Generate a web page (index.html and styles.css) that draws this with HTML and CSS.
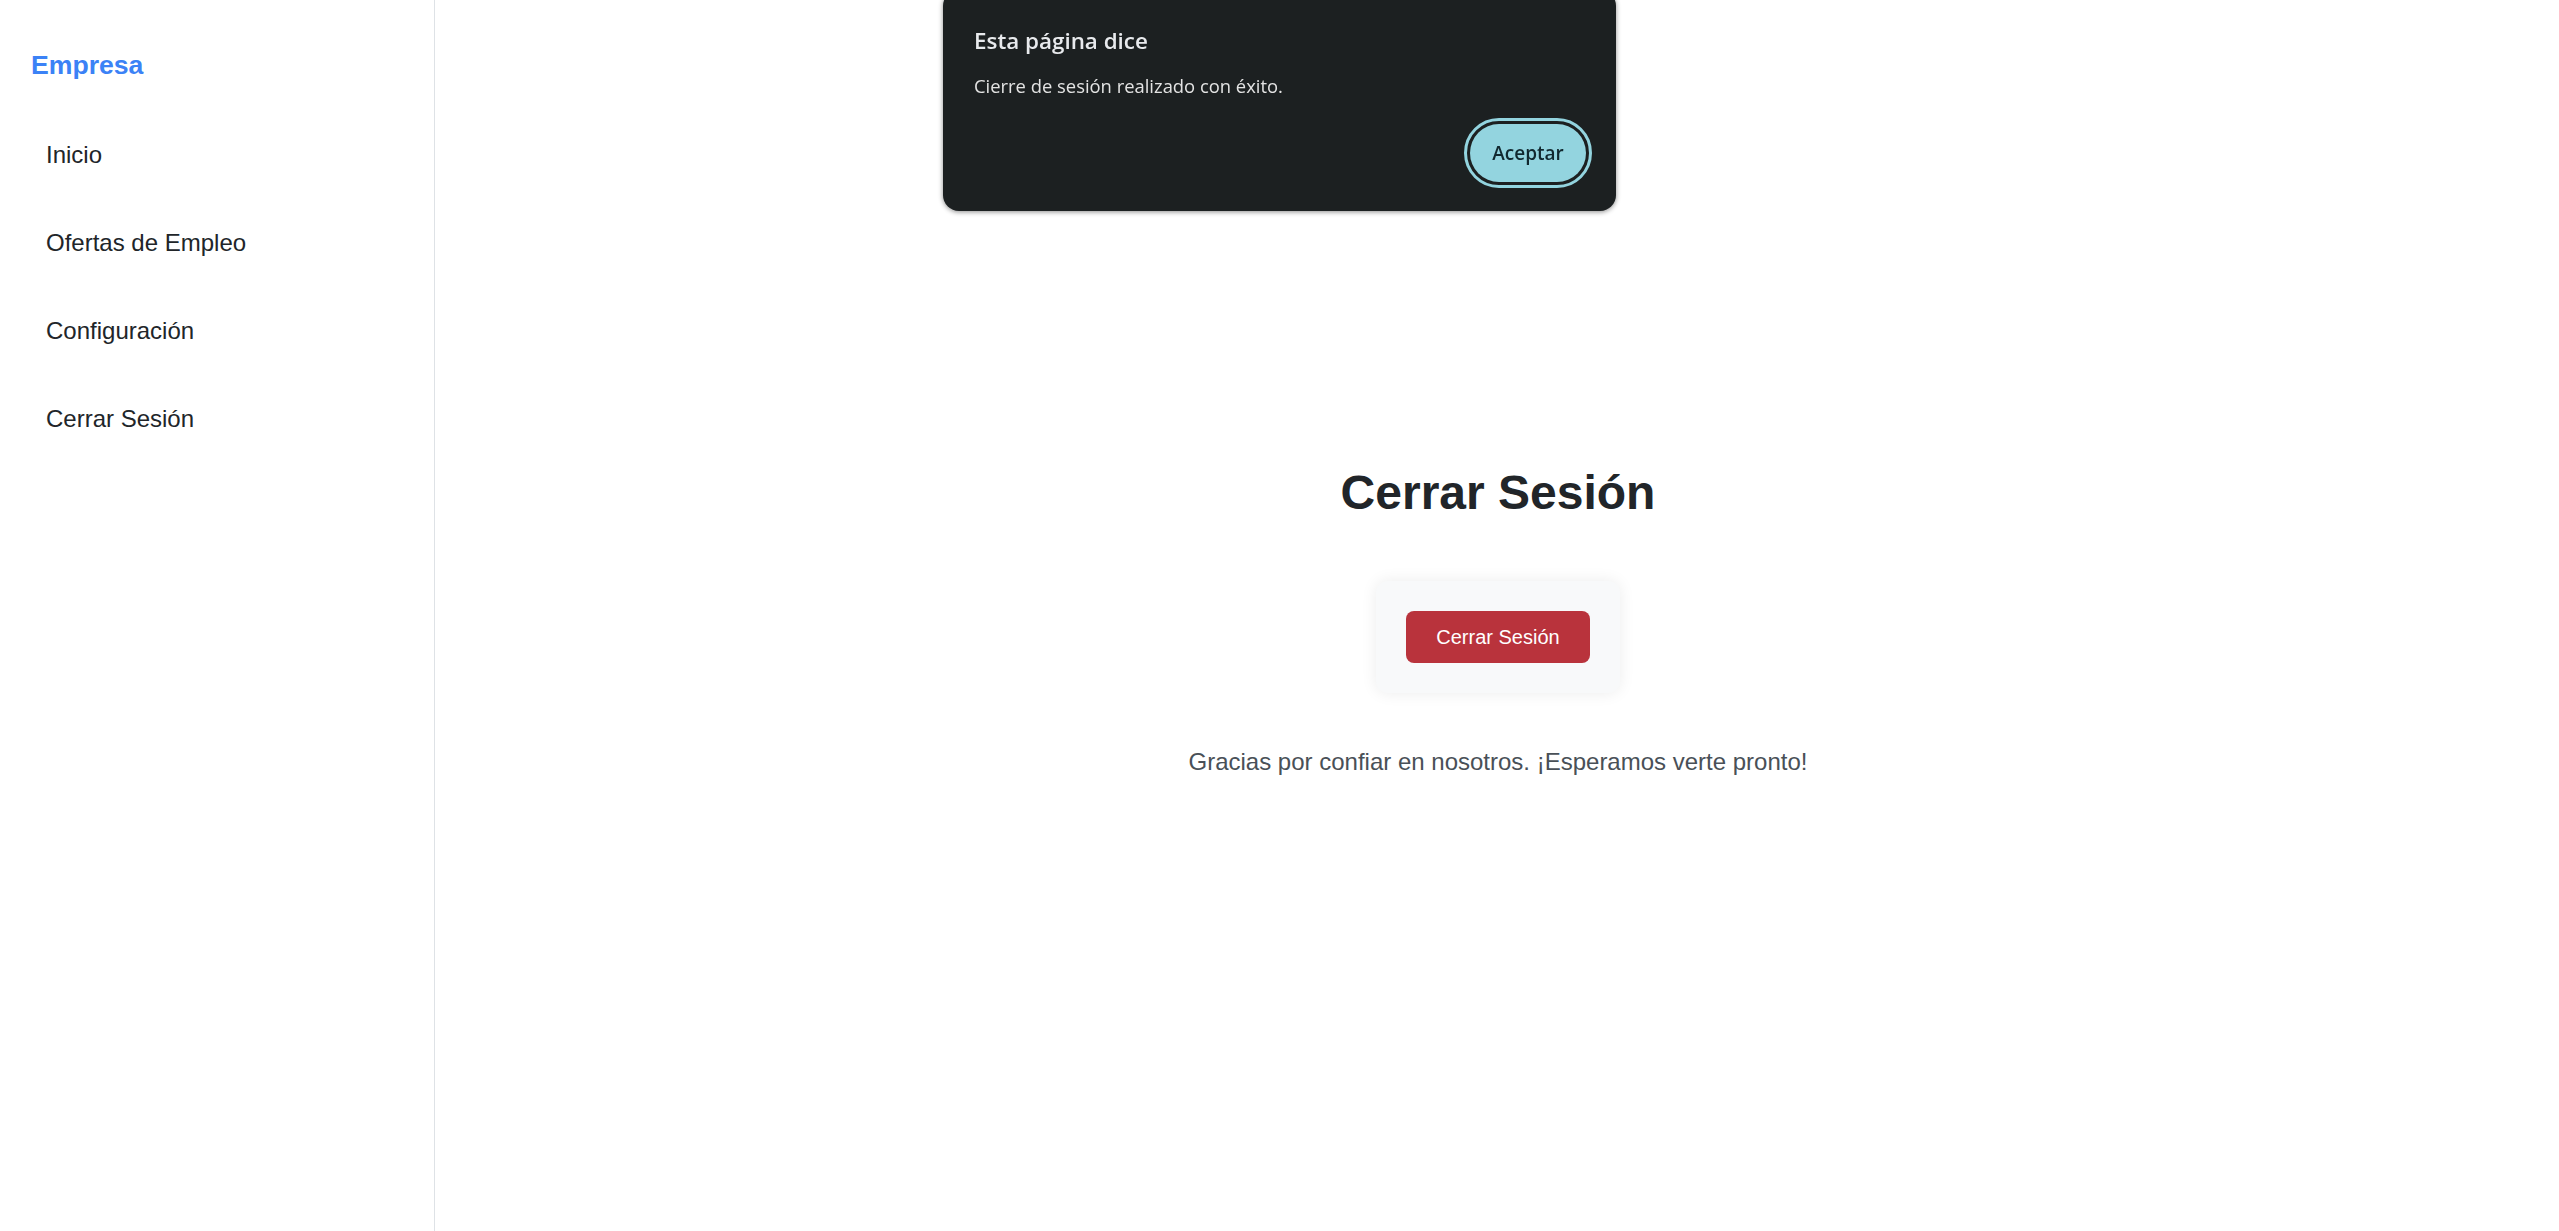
FILE: index.html
```html
<!DOCTYPE html>
<html lang="es">
<head>
<meta charset="utf-8">
<title>Cerrar Sesión</title>
<link rel="stylesheet" href="styles.css">
</head>
<body>
<div class="app">
  <aside class="sidebar">
    <h2 class="brand">Empresa</h2>
    <nav class="nav">
      <a class="nav-item" href="#">Inicio</a>
      <a class="nav-item" href="#">Ofertas de Empleo</a>
      <a class="nav-item" href="#">Configuración</a>
      <a class="nav-item" href="#">Cerrar Sesión</a>
    </nav>
  </aside>
  <main class="main">
    <h1 class="title">Cerrar Sesión</h1>
    <div class="card">
      <button class="btn-danger" type="button">Cerrar Sesión</button>
    </div>
    <p class="note">Gracias por confiar en nosotros. ¡Esperamos verte pronto!</p>
  </main>
</div>
<div class="dialog" role="alertdialog">
  <div class="dialog-title">Esta página dice</div>
  <div class="dialog-msg">Cierre de sesión realizado con éxito.</div>
  <div class="dialog-actions">
    <button class="dialog-btn" type="button">Aceptar</button>
  </div>
</div>
</body>
</html>
```
FILE: styles.css
```css
html, body {
  margin: 0;
  padding: 0;
}
body {
  font-family: "Liberation Sans", Arial, sans-serif;
  background: #ffffff;
  color: #212529;
}
.app {
  display: flex;
  min-height: 100vh;
}
.sidebar {
  width: 435px;
  flex: none;
  box-sizing: border-box;
  border-right: 1px solid #dee2e6;
  padding: 50px 0 0 31px;
  min-height: 1231px;
}
.brand {
  margin: 0;
  font-size: 26.6px;
  line-height: 30px;
  font-weight: bold;
  color: #3b82f6;
}
.nav {
  display: flex;
  flex-direction: column;
  margin-top: 31px;
}
.nav-item {
  display: block;
  padding: 26px 15px;
  font-size: 24px;
  line-height: 36px;
  color: #212529;
  text-decoration: none;
}
.main {
  flex: 1;
  display: flex;
  flex-direction: column;
  align-items: center;
  padding-top: 464px;
  padding-left: 2px;
}
.title {
  margin: 0 0 59px;
  font-size: 48px;
  line-height: 57.6px;
  font-weight: bold;
  color: #212529;
}
.card {
  background: #f8f9fa;
  border-radius: 12px;
  padding: 30px;
  box-shadow: 0 0 16px rgba(0, 0, 0, 0.08);
}
.btn-danger {
  display: block;
  font-family: "Liberation Sans", Arial, sans-serif;
  font-size: 20px;
  line-height: 30px;
  padding: 11px 30px;
  border: 0;
  border-radius: 8px;
  background: #b9333c;
  color: #ffffff;
}
.note {
  margin: 51px 0 0;
  font-size: 24px;
  line-height: 36px;
  color: #495057;
}
.dialog {
  position: fixed;
  left: 943px;
  top: -10px;
  width: 673px;
  height: 221px;
  box-sizing: border-box;
  padding: 37px 30px 29px 31px;
  background: #1c2021;
  border-radius: 16px;
  box-shadow: 0 1px 5px rgba(0, 0, 0, 0.45);
  display: flex;
  flex-direction: column;
  font-family: "Open Sans", "Noto Sans", sans-serif;
}
.dialog-title {
  font-size: 22.4px;
  line-height: 28px;
  font-weight: 600;
  color: #e8eaed;
}
.dialog-msg {
  margin-top: 19px;
  font-size: 18.4px;
  line-height: 24px;
  color: #e3e3e3;
}
.dialog-actions {
  margin-top: auto;
  display: flex;
  justify-content: flex-end;
}
.dialog-btn {
  height: 58px;
  width: 116px;
  padding: 0;
  border: 0;
  border-radius: 29px;
  background: #93d4df;
  color: #11282f;
  font-family: "Open Sans", "Noto Sans", sans-serif;
  font-size: 19px;
  font-weight: 600;
  outline: 3px solid #93d4df;
  outline-offset: 3px;
}
```
